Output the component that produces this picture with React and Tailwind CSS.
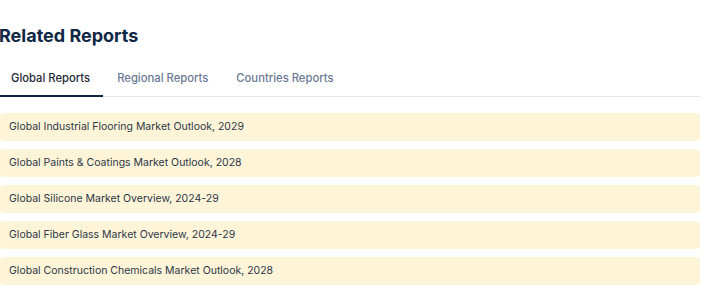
import React, { useState } from 'react'

const tabs = ['Global Reports', 'Regional Reports', 'Countries Reports']

const reports = [
  'Global Industrial Flooring Market Outlook, 2029',
  'Global Paints & Coatings Market Outlook, 2028',
  'Global Silicone Market Overview, 2024-29',
  'Global Fiber Glass Market Overview, 2024-29',
  'Global Construction Chemicals Market Outlook, 2028',
]

export default function App() {
  const [active, setActive] = useState(0)

  return (
    <div className="min-h-screen w-full bg-white font-['Inter',sans-serif]">
      <div className="w-[700px] pt-[24px]">
        <h2 className="-ml-px text-[18px] font-bold leading-[24px] text-[#0f2744]">Related Reports</h2>

        <div className="mt-[16px] flex border-b border-[#e5e7eb]">
          {tabs.map((t, i) => (
            <button
              key={t}
              onClick={() => setActive(i)}
              className={
                i === active
                  ? '-mb-px border-b-2 border-[#0f2744] pl-[11px] pr-[13px] pb-[8px] pt-[6px] text-[11.25px] font-medium text-[#1f2937]'
                  : '-mb-px border-b-2 border-transparent px-[14px] pb-[8px] pt-[6px] text-[11.25px] font-medium text-[#6b7894]'
              }
            >
              {t}
            </button>
          ))}
        </div>

        <ul className="mt-[16px] flex flex-col gap-[8px]">
          {reports.map((r) => (
            <li key={r} className="flex h-[28px] items-center rounded-[4px] bg-[#fef4d7] px-[9px] text-[10.5px] text-[#2d3748]">
              {r}
            </li>
          ))}
        </ul>
      </div>
    </div>
  )
}
